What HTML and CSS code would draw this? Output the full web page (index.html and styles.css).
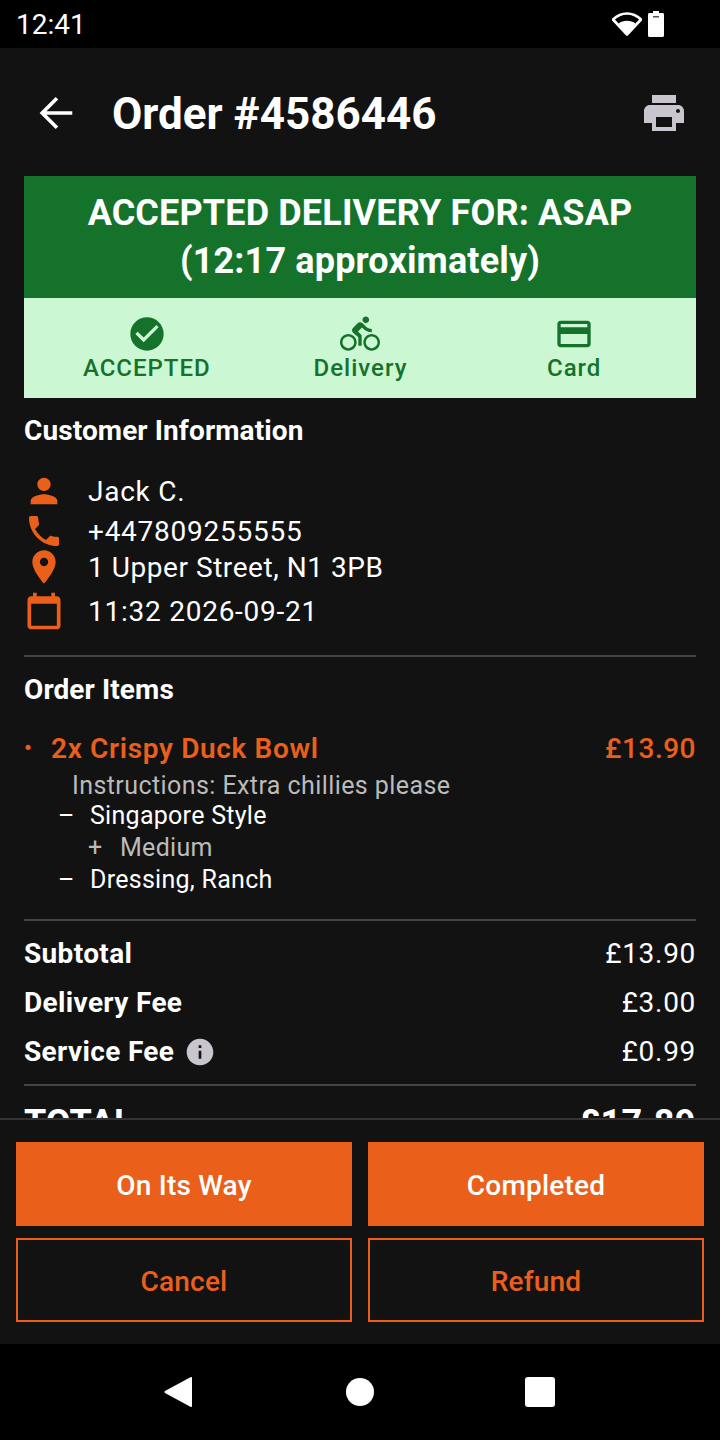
FILE: index.html
```html
<!DOCTYPE html>
<html lang="en">
<head>
    <meta charset="UTF-8">
    <meta name="viewport" content="width=device-width, initial-scale=1.0">
    <title>Order #4586446</title>
    <link rel="stylesheet" href="styles.css">
</head>
<body>
    <div class="status-bar">
        <span class="status-time">12:41</span>
        <div class="status-icons">
            <svg class="wifi-icon" viewBox="0 0 30 24"><path d="M15 22.5 1 7.5C4.8 3.9 9.6 1.5 15 1.5s10.2 2.4 14 6z" fill="none" stroke="#fff" stroke-width="2.6" stroke-linejoin="round"/><path d="M15 22 6.5 11.5C8.8 9.8 11.8 8.8 15 8.8s6.2 1 8.5 2.7z" fill="#fff"/></svg>
            <svg class="battery-icon" viewBox="0 0 16 26"><path d="M5 0h6v2h3.5c.8 0 1.5.7 1.5 1.5v21c0 .8-.7 1.5-1.5 1.5h-13C.7 26 0 25.300 0 24.500v-21C0 2.700.7 2 1.500 2H5z" fill="#fff"/><rect x="5" y="5" width="6" height="1.500" fill="#555"/></svg>
        </div>
    </div>

    <div class="screen">
        <header class="app-header">
            <svg class="back-icon" viewBox="0 0 24 24"><path d="M20.500 12H5.500M12.500 4.300 4.800 12l7.700 7.700"/></svg>
            <h1 class="page-title">Order #4586446</h1>
            <svg class="print-icon" viewBox="0 0 24 24"><path d="M19 8H5c-1.660 0-3 1.340-3 3v6h4v4h12v-4h4v-6c0-1.660-1.340-3-3-3zm-3 11H8v-5h8v5zm3-7c-.55 0-1-.45-1-1s.45-1 1-1 1 .45 1 1-.45 1-1 1zm-1-9H6v4h12V3z"/></svg>
        </header>

        <main class="content">
            <section class="order-status">
                <div class="status-banner">ACCEPTED DELIVERY FOR: ASAP<br>(12:17 approximately)</div>
                <div class="status-tiles">
                    <div class="status-tile">
                        <svg viewBox="0 0 24 24"><path d="M12 2C6.480 2 2 6.480 2 12s4.480 10 10 10 10-4.480 10-10S17.520 2 12 2zm-2 15l-5-5 1.410-1.410L10 14.170l7.590-7.590L19 8l-9 9z"/></svg>
                        <span>ACCEPTED</span>
                    </div>
                    <div class="status-tile">
                        <svg viewBox="0 0 24 24"><path d="M15.500 5.500c1.100 0 2-.9 2-2s-.9-2-2-2-2 .9-2 2 .9 2 2 2zM5 12c-2.800 0-5 2.200-5 5s2.200 5 5 5 5-2.200 5-5-2.200-5-5-5zm0 8.500c-1.900 0-3.500-1.600-3.500-3.500s1.600-3.500 3.500-3.500 3.500 1.600 3.500 3.500-1.600 3.500-3.500 3.500zm5.800-10l2.400-2.400.8.8c1.300 1.300 3 2.100 5.100 2.100V9c-1.500 0-2.700-.6-3.600-1.500l-1.900-1.900c-.5-.4-1-.6-1.600-.6s-1.100.2-1.400.6L7.800 8.400c-.4.4-.6.9-.6 1.400 0 .6.2 1.100.6 1.400L11 14v5h2v-6.200l-2.200-2.300zM19 12c-2.800 0-5 2.200-5 5s2.200 5 5 5 5-2.200 5-5-2.200-5-5-5zm0 8.500c-1.900 0-3.500-1.600-3.500-3.500s1.600-3.500 3.500-3.500 3.500 1.600 3.500 3.500-1.600 3.500-3.500 3.500z"/></svg>
                        <span>Delivery</span>
                    </div>
                    <div class="status-tile">
                        <svg viewBox="0 0 24 24"><path d="M20 4H4c-1.110 0-1.990.89-1.990 2L2 18c0 1.110.89 2 2 2h16c1.110 0 2-.89 2-2V6c0-1.110-.89-2-2-2zm0 14H4v-6h16v6zm0-10H4V6h16v2z"/></svg>
                        <span>Card</span>
                    </div>
                </div>
            </section>

            <section class="customer-section">
                <h2 class="section-title">Customer Information</h2>
                <div class="info-list">
                    <div class="info-row row-name">
                        <svg class="info-icon" viewBox="0 0 24 24"><path d="M12 12c2.210 0 4-1.790 4-4s-1.790-4-4-4-4 1.790-4 4 1.790 4 4 4zm0 2c-2.670 0-8 1.340-8 4v2h16v-2c0-2.660-5.330-4-8-4z"/></svg>
                        <span>Jack C.</span>
                    </div>
                    <div class="info-row row-phone">
                        <svg class="info-icon" viewBox="0 0 24 24"><path d="M6.620 10.790c1.440 2.830 3.760 5.140 6.590 6.590l2.200-2.200c.27-.27.67-.36 1.020-.24 1.120.37 2.330.57 3.570.57.55 0 1 .45 1 1V20c0 .55-.45 1-1 1-9.390 0-17-7.610-17-17 0-.55.45-1 1-1h3.500c.55 0 1 .45 1 1 0 1.250.2 2.450.57 3.570.11.35.03.74-.25 1.020l-2.200 2.200z"/></svg>
                        <span>+447809255555</span>
                    </div>
                    <div class="info-row row-address">
                        <svg class="info-icon" viewBox="0 0 24 24"><path d="M12 2C8.130 2 5 5.130 5 9c0 5.250 7 13 7 13s7-7.750 7-13c0-3.870-3.130-7-7-7zm0 9.500c-1.380 0-2.500-1.120-2.500-2.500s1.120-2.500 2.500-2.500 2.500 1.120 2.500 2.500-1.120 2.500-2.500 2.500z"/></svg>
                        <span>1 Upper Street, N1 3PB</span>
                    </div>
                    <div class="info-row row-date">
                        <svg class="info-icon calendar-icon" viewBox="0 0 24 24"><path d="M19 4h-1V2h-2v2H8V2H6v2H5c-1.100 0-2 .9-2 2v14c0 1.100.9 2 2 2h14c1.100 0 2-.9 2-2V6c0-1.100-.9-2-2-2zm0 16H5V8h14v12z"/></svg>
                        <span>11:32 2026-09-21</span>
                    </div>
                </div>
            </section>

            <section class="items-section">
                <h2 class="section-title">Order Items</h2>
                <div class="item-row">
                    <span class="item-bullet">•</span>
                    <span class="item-name">2x Crispy Duck Bowl</span>
                    <span class="item-price">£13.90</span>
                </div>
                <div class="item-note">Instructions: Extra chillies please</div>
                <div class="item-option"><span class="option-mark">–</span>Singapore Style</div>
                <div class="item-option sub-option"><span class="option-mark">+</span>Medium</div>
                <div class="item-option"><span class="option-mark">–</span>Dressing, Ranch</div>
            </section>

            <section class="totals-section">
                <div class="total-row">
                    <span class="total-label">Subtotal</span>
                    <span class="total-value">£13.90</span>
                </div>
                <div class="total-row">
                    <span class="total-label">Delivery Fee</span>
                    <span class="total-value">£3.00</span>
                </div>
                <div class="total-row">
                    <span class="total-label">Service Fee
                        <svg class="fee-info" viewBox="0 0 24 24"><path d="M12 2C6.480 2 2 6.480 2 12s4.480 10 10 10 10-4.480 10-10S17.520 2 12 2zm1 15h-2v-6h2v6zm0-8h-2V7h2v2z"/></svg>
                    </span>
                    <span class="total-value">£0.99</span>
                </div>
            </section>

            <section class="grand-total">
                <span>TOTAL</span>
                <span class="grand-value">£17.89</span>
            </section>
        </main>

        <footer class="actions">
            <button class="action-btn solid">On Its Way</button>
            <button class="action-btn solid">Completed</button>
            <button class="action-btn outline">Cancel</button>
            <button class="action-btn outline">Refund</button>
        </footer>
    </div>

    <nav class="nav-bar">
        <svg viewBox="0 0 32 32"><path d="M28 2v28a1 1 0 0 1-1.600.8L1 17a1.300 1.300 0 0 1 0-2L26.400 1.200A1 1 0 0 1 28 2z"/></svg>
        <svg viewBox="0 0 32 32"><circle cx="16" cy="16" r="14"/></svg>
        <svg viewBox="0 0 32 32"><rect x="1" y="1" width="30" height="30" rx="3"/></svg>
    </nav>
</body>
</html>
```

FILE: styles.css
```css
* {
    box-sizing: border-box;
}

body {
    font-family: 'Roboto', sans-serif;
    margin: 0;
    width: 720px;
    height: 1440px;
    display: flex;
    flex-direction: column;
    background-color: #000;
    color: #fff;
    overflow: hidden;
}

/* Status bar */
.status-bar {
    height: 48px;
    flex: none;
    display: flex;
    justify-content: space-between;
    align-items: center;
    padding: 0 56px 0 16px;
    background-color: #000;
}

.status-time {
    font-size: 28px;
}

.status-icons {
    display: flex;
    align-items: center;
    gap: 6px;
}

.wifi-icon {
    width: 30px;
    height: 24px;
}

.battery-icon {
    width: 16px;
    height: 26px;
}

/* Main screen */
.screen {
    flex: 1;
    min-height: 0;
    display: flex;
    flex-direction: column;
    background-color: #121212;
}

.app-header {
    height: 128px;
    flex: none;
    display: flex;
    align-items: center;
    padding: 2px 32px 0 33px;
}

.back-icon {
    width: 46px;
    height: 46px;
    flex: none;
    fill: none;
    stroke: #fff;
    stroke-width: 1.9;
}

.page-title {
    flex: 1;
    margin: 0 0 0 33px;
    padding-top: 2px;
    font-size: 44px;
    font-weight: 700;
}

.print-icon {
    width: 48px;
    height: 48px;
    fill: #c9c5ce;
}

.content {
    flex: 1;
    min-height: 0;
    overflow: hidden;
    padding: 0 24px;
}

/* Order status */
.status-banner {
    height: 122px;
    padding-top: 13px;
    background-color: #15722b;
    font-size: 36px;
    line-height: 48px;
    font-weight: 700;
    letter-spacing: 0.15px;
    text-align: center;
}

.status-tiles {
    height: 100px;
    display: grid;
    grid-template-columns: repeat(3, 1fr);
    padding: 0 15px 0 16px;
    background-color: #ccf7d3;
    color: #15722b;
}

.status-tile {
    display: flex;
    flex-direction: column;
    align-items: center;
    padding-top: 16px;
}

.status-tile svg {
    width: 40px;
    height: 40px;
    margin-bottom: -1px;
    fill: #15722b;
}

.status-tile span {
    font-size: 24px;
    line-height: 30px;
    font-weight: 500;
    letter-spacing: 1px;
}

/* Sections */
.section-title {
    margin: 0;
    font-size: 28px;
    line-height: 36px;
    font-weight: 700;
    letter-spacing: 0.1px;
}

.customer-section {
    padding-top: 15px;
    padding-bottom: 16px;
    border-bottom: 2px solid #444;
}

.info-list {
    margin-top: 22px;
}

.info-row {
    display: flex;
    align-items: center;
    gap: 24px;
    height: 40px;
    font-size: 28px;
    letter-spacing: 0.75px;
}

.row-address {
    height: 32px;
    letter-spacing: 0.55px;
}

.row-date {
    height: 56px;
}

.info-icon {
    width: 40px;
    height: 40px;
    flex: none;
    fill: #ea601b;
}

.calendar-icon {
    width: 44px;
    height: 44px;
    margin: 0 -2px;
}

.items-section {
    padding-top: 15px;
    padding-bottom: 23px;
    border-bottom: 2px solid #444;
}

.item-row {
    display: flex;
    align-items: center;
    margin-top: 23px;
    font-size: 28px;
    line-height: 36px;
    font-weight: 600;
    letter-spacing: 0.65px;
    color: #ea601b;
}

.item-bullet {
    width: 27px;
    font-size: 22px;
}

.item-name {
    flex: 1;
}

.item-price {
    font-weight: 500;
    letter-spacing: 0.5px;
}

.item-note {
    margin-top: 4px;
    padding-left: 48px;
    font-size: 25px;
    line-height: 29px;
    letter-spacing: 0.42px;
    color: #bbb;
}

.item-option {
    padding-left: 34px;
    font-size: 25px;
    line-height: 32px;
    letter-spacing: 0.28px;
}

.option-mark {
    display: inline-block;
    width: 32px;
}

.sub-option {
    padding-left: 64px;
    color: #bbb;
}

.totals-section {
    padding-top: 8px;
    padding-bottom: 8px;
    border-bottom: 2px solid #444;
}

.total-row {
    display: flex;
    justify-content: space-between;
    align-items: center;
    height: 49px;
}

.total-label {
    display: flex;
    align-items: center;
    gap: 10px;
    font-size: 28px;
    font-weight: 700;
    letter-spacing: 0.35px;
}

.total-value {
    font-size: 28px;
    letter-spacing: 0.7px;
}

.fee-info {
    width: 32px;
    height: 32px;
    fill: #c9c5ce;
}

.grand-total {
    display: flex;
    justify-content: space-between;
    padding-top: 16px;
    font-size: 36px;
    font-weight: 700;
}

.grand-value {
    letter-spacing: 0.5px;
}

/* Bottom actions */
.actions {
    flex: none;
    display: grid;
    grid-template-columns: 1fr 1fr;
    gap: 12px 16px;
    padding: 22px 16px;
    border-top: 2px solid #333;
    background-color: #121212;
}

.action-btn {
    height: 84px;
    padding-top: 4px;
    border: 2px solid #ea601b;
    border-radius: 0;
    font-family: inherit;
    font-size: 28px;
    font-weight: 500;
    letter-spacing: 0.2px;
}

.solid {
    background-color: #ea601b;
    color: #fff;
}

.outline {
    background-color: transparent;
    color: #ea601b;
}

/* Navigation bar */
.nav-bar {
    height: 96px;
    flex: none;
    display: flex;
    justify-content: center;
    align-items: center;
    gap: 148px;
    background-color: #000;
}

.nav-bar svg {
    width: 32px;
    height: 32px;
    fill: #fff;
}
```
